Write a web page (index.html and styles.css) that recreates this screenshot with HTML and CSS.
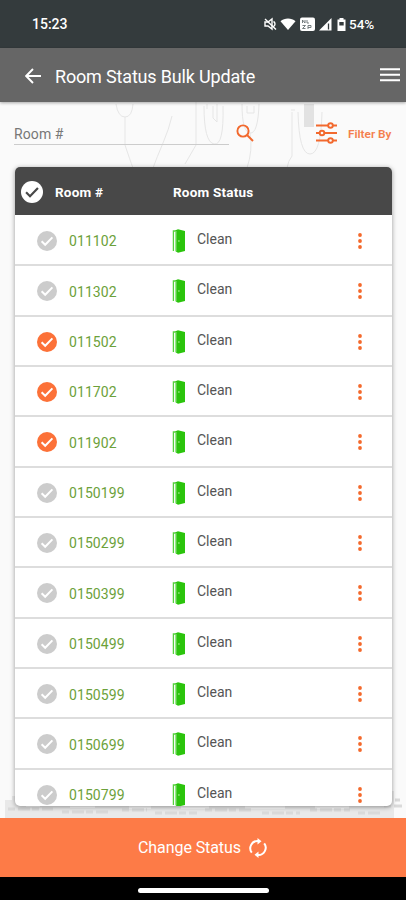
FILE: index.html
```html
<!DOCTYPE html>
<html lang="en">
<head>
<meta charset="utf-8">
<title>Room Status Bulk Update</title>
<link rel="stylesheet" href="styles.css">
</head>
<body>
<svg class="defs" width="0" height="0" aria-hidden="true">
  <symbol id="check" viewBox="0 0 20 20"><circle cx="10" cy="10" r="10" fill="currentColor"/><path d="M4.600 10.300l3.600 3.500 7.200-7.400" fill="none" stroke="var(--tick)" stroke-width="2"/></symbol>
  <symbol id="door" viewBox="0 0 14 24"><path d="M1.400 22V2H5" fill="none" stroke="#55d13c" stroke-width="1.300"/><path d="M3.500 1.200L6 .3 13 2v20L6 23.700 3.500 22.300z" fill="#2bc40c"/><path d="M4 2v20" stroke="#a5ea98" stroke-width=".8"/><circle cx="6.900" cy="12" r=".8" fill="#b8f0a8"/></symbol>
  <symbol id="dots" viewBox="0 0 4 16"><circle cx="2" cy="2" r="1.900"/><circle cx="2" cy="8" r="1.900"/><circle cx="2" cy="14" r="1.900"/></symbol>
</svg>
<div class="phone">
  <header class="status">
    <span class="time">15:23</span>
    <div class="indicators">
      <svg width="85" height="16" viewBox="0 0 85 16" fill="#fff">
        <path d="M1 6h3l4-3v10l-4-3H1z" fill="none" stroke="#fff" stroke-width="1.400"/><path d="M9.500 5.500c2 1 2 4 0 5M1 3l11 10.500" fill="none" stroke="#fff" stroke-width="1.400"/>
        <path d="M16.500 5.300C20.500 1.700 27.500 1.700 31.500 5.300L24 14z"/>
        <rect x="36" y="1.500" width="15" height="13.500" rx="2"/>
        <path d="M38.500 7V4l2.500 3V4M43 4v3h2M38.500 9.500h3l-3 3h3M44 13V9.500h3v2h-3" fill="none" stroke="#687073" stroke-width=".9"/>
        <path d="M55 14.500L67.500 2v12.500z"/><path d="M64.500 7.500v6" stroke="#343b3d" stroke-width="1.300"/>
        <path d="M73.500 3.500h2V2h4v1.500h2v11.500h-8z"/><path d="M75.300 6h4.400v3.500h-4.400z" fill="#343b3d"/>
      </svg>
      <span class="battery">54%</span>
    </div>
  </header>
  <nav class="bar">
    <svg class="back" width="16" height="16" viewBox="0 0 16 16"><path d="M16 8H1.500M8 1L1.200 8 8 15" fill="none" stroke="#fff" stroke-width="1.900"/></svg>
    <h1>Room Status Bulk Update</h1>
    <svg class="menu" width="20" height="14" viewBox="0 0 20 14"><path d="M0 1.200h20M0 6.700h20M0 12.200h20" stroke="#fff" stroke-width="2"/></svg>
  </nav>
  <main>
    <svg class="sketch" width="406" height="66" viewBox="0 102 406 66" fill="none" stroke="#e6e6e6">
      <path d="M116 104q2 13 9 13t8-13M125 117v28q5 15 8 23M172 116q-3 13-9 27t-10 25M196 102v43l-11 19M204 106q0 36 10 38t9-38M207 104v5M213 106v12l4 4v-18M242 104q0 28 8 29t9-29M250 133q3 17-3 35M247 106v7h7v-7M291 110h4M292 112v44q-4 5-5 12M298 112q1 42 12 42t12-42"/>
      <path d="M304 104h10v23h-10z" fill="#e2e2e2" stroke="none"/>
    </svg>
    <div class="tools">
      <div class="search">Room #</div>
      <svg class="lens" width="18" height="18" viewBox="0 0 18 18" fill="none" stroke="#f2692e" stroke-width="1.900"><circle cx="7" cy="7" r="5.600"/><path d="M11 11l6 6"/></svg>
      <svg class="sliders" width="22" height="22" viewBox="0 0 22 22" fill="#fafafa" stroke="#f2692e" stroke-width="1.900"><path d="M0 3.500h21M0 11h21M0 18.500h21"/><circle cx="14.500" cy="3.500" r="2.300"/><circle cx="6" cy="11" r="2.300"/><circle cx="14.500" cy="18.500" r="2.300"/></svg>
      <span class="filter">Filter By</span>
    </div>
    <section class="card">
      <div class="head"><svg class="all"><use href="#check"/></svg><span class="col-room">Room #</span><span>Room Status</span></div>
      <div class="rows" id="rows"></div>
    </section>
    <svg class="skyline" width="406" height="36" viewBox="0 0 406 36">
      <path d="M5 18h7v-4h7v6h7v5h14v-3h30v4h25v-3h34v4h22v-3h30v3h28v-4h36v4h40v-3h30v3h34v-4h24V12h6v-5h4v6h6v-4h5v27H5z" fill="#e9e9e9"/>
      <path d="M8 27h45M62 30h48M122 28h25M155 31h42M205 28h46M262 31h38M310 28h40M358 31h22M385 18h15M384 24h18" stroke="#dadada" stroke-width="3" stroke-dasharray="7 3 12 2"/>
    </svg>
  </main>
  <footer class="action"><span>Change Status</span>
    <svg width="20" height="20" viewBox="0 0 20 20" fill="none" stroke="#fff" stroke-width="2"><path d="M3.800 14.700A7.300 7.300 0 0 1 10 3M16.200 5.300A7.300 7.300 0 0 1 10 17"/><path d="M9.500 0l4 3.200-4 3.300zM10.500 20l-4-3.200 4-3.300z" fill="#fff" stroke="none"/></svg>
  </footer>
  <div class="gesture"><i></i></div>
</div>
<script src="rows.js"></script>
</body>
</html>
```
FILE: rows.js
```js
const rooms = ['011102', '011302', '011502', '011702', '011902', '0150199', '0150299', '0150399', '0150499', '0150599', '0150699', '0150799'];
const selected = ['011502', '011702', '011902'];
document.getElementById('rows').innerHTML = rooms.map(room => `
  <div class="row">
    <svg class="check${selected.includes(room) ? ' on' : ''}"><use href="#check"/></svg>
    <span class="number">${room}</span>
    <svg class="door"><use href="#door"/></svg>
    <span class="state">Clean</span>
    <svg class="dots"><use href="#dots"/></svg>
  </div>`).join('');
```
FILE: styles.css
```css
* { box-sizing: border-box; }
body { margin: 0; font-family: Roboto, sans-serif; }
.defs { position: absolute; }
.phone { width: 406px; height: 900px; display: flex; flex-direction: column; overflow: hidden; background: #fafafa; }
svg { display: block; flex: none; }
.status { height: 48px; background: #343b3d; color: #fff; display: flex; justify-content: space-between; padding: 0 30px 0 32px; align-items: center; font-weight: 500; }
.time { font-size: 14px; }
.indicators { display: flex; width: 112px; }
.battery { font-size: 13.5px; line-height: 17px; }
.bar { position: relative; z-index: 2; height: 54px; background: #666; color: #fff; display: flex; align-items: center; padding: 2px 6px 0 25px; box-shadow: 0 1px 3px #0005; }
.bar h1 { margin: 0 auto 0 14px; font-size: 18px; letter-spacing: -.17px; font-weight: 400; }
.menu { margin-top: -2px; }
main { position: relative; height: 716px; display: flex; flex-direction: column; }
.sketch { position: absolute; left: 0; top: 0; }
.tools { position: relative; height: 65px; display: flex; align-items: center; padding: 0 14px; }
.search { width: 215px; height: 24px; line-height: 27px; border-bottom: 1px solid #ccc; margin-top: -4px; font-size: 14px; letter-spacing: .1px; color: #777; }
.lens { margin: -3px 0 0 7px; }
.sliders { margin: -3px 0 0 62px; }
.filter { margin: -1px 0 0 10px; font-size: 11.8px; font-weight: 600; color: #f4804e; white-space: nowrap; }
.card { position: relative; z-index: 1; width: 377px; height: 639px; margin-left: 15px; border-radius: 5px; overflow: hidden; background: #fff; box-shadow: 0 1px 5px #0006; flex: none; }
.head { height: 48px; background: #484848; color: #fff; display: flex; align-items: center; padding: 1px 0 0 6px; font-size: 13.5px; letter-spacing: .22px; font-weight: 700; }
.all { width: 22px; height: 22px; color: #fff; --tick: #484848; }
.col-room { margin-left: 12px; width: 118px; }
.rows { padding-top: 1px; }
.row { height: 50.35px; border-bottom: 2px solid #ddd; display: flex; align-items: center; padding: 1.5px 0 0 22px; font-size: 14px; }
.check { width: 20px; height: 20px; color: #ccc; --tick: #fff; }
.check.on { color: #fc7138; }
.number { width: 103px; margin-left: 12px; padding-top: 1px; letter-spacing: .08px; color: #6ca13a; }
.door { width: 14px; height: 24px; }
.state { width: 151px; margin: -4px 0 0 11px; color: #555; }
.dots { width: 4px; height: 16px; margin-left: 9.5px; fill: #f4692b; }
.skyline { margin-top: -24px; }
.action { height: 59px; background: #fd7b47; color: #fff; display: flex; align-items: center; justify-content: center; gap: 7px; font-size: 16px; letter-spacing: -.08px; }
.gesture { height: 23px; background: #000; display: flex; align-items: center; justify-content: center; padding-top: 3px; }
.gesture i { width: 131px; height: 5px; border-radius: 3px; background: #fff; }
```
